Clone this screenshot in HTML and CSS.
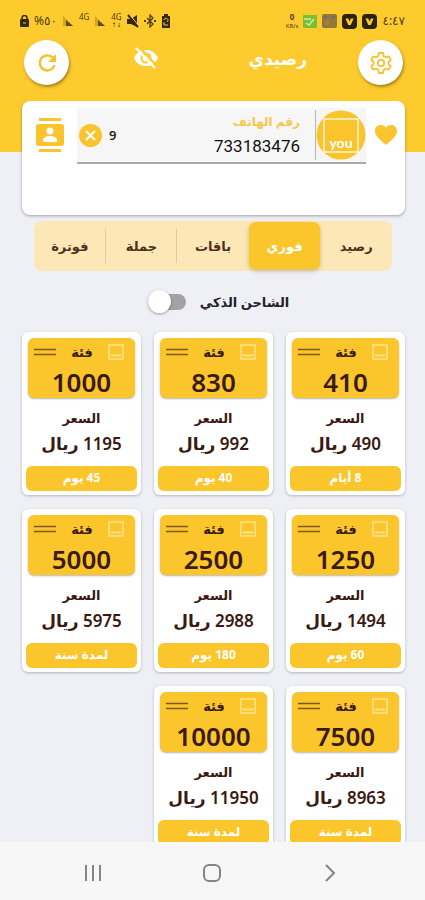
FILE: index.html
```
<!DOCTYPE html>
<html lang="ar" dir="rtl">
<head>
    <meta charset="UTF-8">
    <meta name="viewport" content="width=device-width, initial-scale=1.0">
    <title>رصيدي</title>
    <link rel="stylesheet" href="styles.css">
</head>
<body>
    <!-- Shared icons -->
    <svg class="sprite" aria-hidden="true">
        <symbol id="signal" viewBox="0 0 12 12">
            <path d="M1 1v10h10z" fill="#b98e1d" opacity="0.6"/>
            <path d="M4 5v6h7z" fill="#5d4816"/>
        </symbol>
        <symbol id="vbadge" viewBox="0 0 15 15">
            <rect width="15" height="15" rx="4" fill="#2b2210"/>
            <path d="M3.5 4.5h2.7l1.4 3 1.4-3h2.6L8.8 11H6.3z" fill="#fdcb2d"/>
        </symbol>
        <symbol id="sim" viewBox="0 0 16 16">
            <rect x="1" y="1" width="14" height="14" fill="none" stroke="#ffe596" stroke-width="1.4"/>
            <path d="M3 11.5h10" stroke="#ffe596" stroke-width="2" stroke-dasharray="3 0.5"/>
        </symbol>
        <symbol id="lines" viewBox="0 0 22 8">
            <path d="M0 1.5h22M0 6.5h22" stroke="#805710" stroke-width="1.4"/>
        </symbol>
    </svg>

    <div class="app">
        <header class="header">
            <div class="status-bar">
                <div class="status-group">
                    <span class="clock">٤:٤٧</span>
                    <svg width="15" height="15"><use href="#vbadge"/></svg>
                    <svg width="15" height="15"><use href="#vbadge"/></svg>
                    <svg width="15" height="14" viewBox="0 0 15 14">
                        <rect width="15" height="14" rx="2" fill="#8f7a35"/>
                        <path d="M2 2h3v2H2zM10 2h3v2h-3z" fill="#54718e"/>
                        <path d="M3 7h4v4H3z" fill="#a77d57"/>
                        <path d="M6 4h3v2H6z" fill="#c8594c"/>
                    </svg>
                    <svg width="14" height="13" viewBox="0 0 14 13">
                        <rect width="14" height="13" rx="1" fill="#7bbd36"/>
                        <path d="M1 4h7M3 8l3 2 5-6" stroke="#d3ec9b" stroke-width="1.5" fill="none"/>
                    </svg>
                    <span class="speed" dir="ltr"><b>0</b><small>KB/s</small></span>
                </div>
                <div class="status-group">
                    <svg width="10" height="14" viewBox="0 0 10 14">
                        <path d="M3 0h4v2h2v12H1V2h2z" fill="#33290f"/>
                        <path d="M3 6a2 2 0 1 1 3 2M3 8v3h4" stroke="#fdcb2d" fill="none"/>
                    </svg>
                    <svg width="12" height="14" viewBox="0 0 12 14">
                        <path d="M3 4l6 6-3 3V1l3 3-6 6" stroke="#4e3d14" stroke-width="1.3" fill="none"/>
                        <path d="M0 6h2v2H0zM10 6h2v2h-2z" fill="#4e3d14"/>
                    </svg>
                    <svg width="12" height="14" viewBox="0 0 12 14">
                        <path d="M0 5h4l6-4v12L4 10H0z" fill="#33290f"/>
                        <path d="M1 1l10 12" stroke="#33290f" stroke-width="2"/>
                        <path d="M3 1l9 11" stroke="#fdcb2d"/>
                    </svg>
                    <span class="network">4G<small>↓↑</small></span>
                    <svg width="12" height="12"><use href="#signal"/></svg>
                    <span class="network">4G</span>
                    <svg width="12" height="12"><use href="#signal"/></svg>
                    <span class="battery" dir="ltr">%٥٠</span>
                    <svg width="9" height="12" viewBox="0 0 9 12">
                        <path d="M2 5V3a2.500 2.500 0 0 1 5 0v2" stroke="#33290f" stroke-width="1.5" fill="none"/>
                        <rect y="4" width="9" height="8" rx="1" fill="#33290f"/>
                        <path d="M3 8h3" stroke="#fdcb2d"/>
                    </svg>
                </div>
            </div>

            <div class="title-bar">
                <button class="round-button" aria-label="الإعدادات">
                    <svg width="24" height="24" viewBox="0 0 24 24" fill="none" stroke="#f6bf2c" stroke-width="1.8" stroke-linejoin="round">
                        <path d="M10 2h4l.7 3.100 2.100 1.200 3-.9 2 3.500-2.300 2.100v2l2.300 2.100-2 3.500-3-.9-2.100 1.200L14 22h-4l-.7-3.100-2.100-1.200-3 .9-2-3.500L4.500 13v-2L2.200 8.900l2-3.500 3 .9 2.100-1.200z"/>
                        <circle cx="12" cy="12" r="3.200"/>
                    </svg>
                </button>
                <h1>رصيدي</h1>
                <button class="plain-button" aria-label="إخفاء الرصيد">
                    <svg width="26" height="24" viewBox="0 0 26 24">
                        <path d="M1 12C3.500 6.500 8 4 13 4s9.500 2.500 12 8c-2.500 5.500-7 8-12 8S3.500 17.500 1 12z" fill="#fff"/>
                        <circle cx="13" cy="12" r="4.500" fill="none" stroke="#fdcb2d" stroke-width="2"/>
                        <path d="M5 0l19 20" stroke="#fdcb2d" stroke-width="2.500"/>
                        <path d="M3 2l19 20" stroke="#fff" stroke-width="2.200"/>
                    </svg>
                </button>
                <button class="round-button" aria-label="تحديث">
                    <svg width="22" height="22" viewBox="0 0 22 22">
                        <path d="M16.500 5.500A7.500 7.500 0 1 0 18.500 13" stroke="#f6bf2c" stroke-width="2.400" fill="none"/>
                        <path d="M20 2v8h-8z" fill="#f6bf2c"/>
                    </svg>
                </button>
            </div>
        </header>

        <main class="content">
            <section class="phone-card">
                <button class="plain-button" aria-label="المفضلة">
                    <svg width="22" height="20" viewBox="0 0 22 20">
                        <path d="M11 20C4 14 0 10.500 0 6 0 2.500 2.500 0 5.800 0 8 0 10 1 11 2.800 12 1 14 0 16.200 0 19.500 0 22 2.500 22 6c0 4.500-4 8-11 14z" fill="#fbc42c"/>
                    </svg>
                </button>
                <div class="phone-field">
                    <svg class="operator" width="50" height="50" viewBox="0 0 50 50">
                        <circle cx="25" cy="25" r="24.500" fill="#fbc42c"/>
                        <rect x="8" y="9" width="34" height="33" fill="none" stroke="#fff3cf" stroke-width="1.600"/>
                        <text x="25" y="38" text-anchor="middle" class="operator-name">you</text>
                    </svg>
                    <div class="phone-text">
                        <label for="phone">رقم الهاتف</label>
                        <input id="phone" type="tel" value="733183476" dir="ltr">
                    </div>
                    <span class="digit-count">9</span>
                    <button class="plain-button" aria-label="مسح">
                        <svg width="23" height="23" viewBox="0 0 23 23">
                            <circle cx="11.500" cy="11.500" r="11.500" fill="#fbc42c"/>
                            <path d="M7 7l9 9M16 7l-9 9" stroke="#fff" stroke-width="2.200"/>
                        </svg>
                    </button>
                </div>
                <button class="plain-button" aria-label="جهات الاتصال">
                    <svg width="28" height="34" viewBox="0 0 28 34">
                        <path d="M3 0h22v3H3zM3 31h22v3H3z" fill="#fbc42c"/>
                        <rect y="6" width="28" height="22" rx="2.500" fill="#fbc42c"/>
                        <circle cx="14" cy="13" r="3.500" fill="#fff"/>
                        <path d="M7 24v-2c0-2.500 4-4 7-4s7 1.500 7 4v2z" fill="#fff"/>
                    </svg>
                </button>
            </section>

            <nav class="tabs">
                <button>رصيد</button>
                <button class="active">فوري</button>
                <button>باقات</button>
                <button>جملة</button>
                <button>فوترة</button>
            </nav>

            <div class="smart-charge">
                <label for="smart">الشاحن الذكي</label>
                <input id="smart" type="checkbox" class="switch">
            </div>

            <section class="cards">
                <article class="card">
                    <div class="card-top">
                        <div class="card-head">
                            <svg width="16" height="16"><use href="#sim"/></svg>
                            <span>فئة</span>
                            <svg width="22" height="8"><use href="#lines"/></svg>
                        </div>
                        <strong>410</strong>
                    </div>
                    <div class="card-label">السعر</div>
                    <div class="card-price">490 ريال</div>
                    <div class="card-period">8 أيام</div>
                </article>
                <article class="card">
                    <div class="card-top">
                        <div class="card-head">
                            <svg width="16" height="16"><use href="#sim"/></svg>
                            <span>فئة</span>
                            <svg width="22" height="8"><use href="#lines"/></svg>
                        </div>
                        <strong>830</strong>
                    </div>
                    <div class="card-label">السعر</div>
                    <div class="card-price">992 ريال</div>
                    <div class="card-period">40 يوم</div>
                </article>
                <article class="card">
                    <div class="card-top">
                        <div class="card-head">
                            <svg width="16" height="16"><use href="#sim"/></svg>
                            <span>فئة</span>
                            <svg width="22" height="8"><use href="#lines"/></svg>
                        </div>
                        <strong>1000</strong>
                    </div>
                    <div class="card-label">السعر</div>
                    <div class="card-price">1195 ريال</div>
                    <div class="card-period">45 يوم</div>
                </article>
                <article class="card">
                    <div class="card-top">
                        <div class="card-head">
                            <svg width="16" height="16"><use href="#sim"/></svg>
                            <span>فئة</span>
                            <svg width="22" height="8"><use href="#lines"/></svg>
                        </div>
                        <strong>1250</strong>
                    </div>
                    <div class="card-label">السعر</div>
                    <div class="card-price">1494 ريال</div>
                    <div class="card-period">60 يوم</div>
                </article>
                <article class="card">
                    <div class="card-top">
                        <div class="card-head">
                            <svg width="16" height="16"><use href="#sim"/></svg>
                            <span>فئة</span>
                            <svg width="22" height="8"><use href="#lines"/></svg>
                        </div>
                        <strong>2500</strong>
                    </div>
                    <div class="card-label">السعر</div>
                    <div class="card-price">2988 ريال</div>
                    <div class="card-period">180 يوم</div>
                </article>
                <article class="card">
                    <div class="card-top">
                        <div class="card-head">
                            <svg width="16" height="16"><use href="#sim"/></svg>
                            <span>فئة</span>
                            <svg width="22" height="8"><use href="#lines"/></svg>
                        </div>
                        <strong>5000</strong>
                    </div>
                    <div class="card-label">السعر</div>
                    <div class="card-price">5975 ريال</div>
                    <div class="card-period">لمدة سنة</div>
                </article>
                <article class="card">
                    <div class="card-top">
                        <div class="card-head">
                            <svg width="16" height="16"><use href="#sim"/></svg>
                            <span>فئة</span>
                            <svg width="22" height="8"><use href="#lines"/></svg>
                        </div>
                        <strong>7500</strong>
                    </div>
                    <div class="card-label">السعر</div>
                    <div class="card-price">8963 ريال</div>
                    <div class="card-period">لمدة سنة</div>
                </article>
                <article class="card">
                    <div class="card-top">
                        <div class="card-head">
                            <svg width="16" height="16"><use href="#sim"/></svg>
                            <span>فئة</span>
                            <svg width="22" height="8"><use href="#lines"/></svg>
                        </div>
                        <strong>10000</strong>
                    </div>
                    <div class="card-label">السعر</div>
                    <div class="card-price">11950 ريال</div>
                    <div class="card-period">لمدة سنة</div>
                </article>
            </section>
        </main>

        <footer class="nav-bar">
            <button class="plain-button" aria-label="رجوع">
                <svg width="20" height="20" viewBox="0 0 20 20" fill="none" stroke="#858585" stroke-width="2">
                    <path d="M6 2l8 8-8 8"/>
                </svg>
            </button>
            <button class="plain-button" aria-label="الرئيسية">
                <svg width="20" height="20" viewBox="0 0 20 20" fill="none" stroke="#858585" stroke-width="2">
                    <rect x="2" y="2" width="16" height="16" rx="5"/>
                </svg>
            </button>
            <button class="plain-button" aria-label="التطبيقات">
                <svg width="20" height="20" viewBox="0 0 20 20" fill="none" stroke="#858585" stroke-width="2">
                    <path d="M3 2v16M10 2v16M17 2v16"/>
                </svg>
            </button>
        </footer>
    </div>
</body>
</html>
```
FILE: styles.css
```
:root {
    --primary-color: #fdcb2d;
    --accent-color: #fbc62b;
    --background-color: #eff0f6;
    --text-color: #3a1a12;
}

* {
    margin: 0;
    padding: 0;
    box-sizing: border-box;
}

body {
    font-family: 'Noto Sans', 'DejaVu Sans', sans-serif;
    background-color: var(--background-color);
    color: var(--text-color);
}

button {
    font: inherit;
    border: none;
    cursor: pointer;
}

svg {
    display: block;
    flex: none;
}

.sprite {
    display: none;
}

.app {
    height: 100vh;
    display: flex;
    flex-direction: column;
}

/* Header */
.header {
    background-color: var(--primary-color);
    padding: 10px 20px 67px;
    flex: none;
}

.status-bar {
    display: flex;
    justify-content: space-between;
    align-items: center;
    height: 22px;
    color: #4e3d14;
}

.status-group {
    display: flex;
    align-items: center;
    gap: 5px;
}

.clock,
.battery {
    font-size: 12px;
    line-height: 14px;
}

.speed,
.network {
    display: flex;
    flex-direction: column;
    align-items: center;
    font-size: 8px;
    line-height: 8px;
}

.network {
    height: 16px;
}

.speed b {
    line-height: 10px;
}

.speed small,
.network small {
    font-size: 6px;
    line-height: 8px;
}

.title-bar {
    display: flex;
    align-items: center;
    padding: 8px 2px 0 4px;
}

.title-bar h1 {
    color: white;
    font-size: 17px;
    line-height: 28px;
    margin-right: 51px;
    padding-bottom: 8px;
}

.title-bar .plain-button {
    margin-right: auto;
    margin-left: 64px;
    padding-bottom: 10px;
}

.round-button {
    width: 45px;
    height: 45px;
    display: flex;
    align-items: center;
    justify-content: center;
    border-radius: 50%;
    background-color: white;
    box-shadow: 1px 2px 3px rgba(80, 60, 0, 0.5);
}

.plain-button {
    display: flex;
    background: none;
}

/* Phone number */
.content {
    flex: 1;
    min-height: 0;
    overflow: hidden;
    padding: 0 20px 0 22px;
    margin-top: -51px;
}

.phone-card {
    display: flex;
    align-items: flex-start;
    gap: 9px;
    height: 114px;
    padding: 7px 8px 0 14px;
    border-radius: 8px;
    background-color: white;
    box-shadow: 0 1px 3px rgba(0, 0, 0, 0.35);
}

.phone-card > .plain-button {
    height: 54px;
    align-items: center;
}

.phone-field {
    flex: 1;
    min-width: 0;
    display: flex;
    align-items: center;
    height: 56px;
    margin-left: 4px;
    padding-left: 2px;
    background-color: #f6f6f6;
    border-bottom: 2px solid #ababab;
}

.operator-name {
    fill: white;
    font-family: Lato, sans-serif;
    font-size: 14px;
    font-weight: bold;
}

.phone-text {
    flex: 1;
    min-width: 0;
    height: 50px;
    padding-right: 15px;
    border-right: 1px solid #b5b5b5;
}

.phone-text label {
    display: block;
    color: #f5c850;
    font-size: 12px;
    font-weight: bold;
    line-height: 24px;
}

.phone-text input {
    width: 100%;
    border: none;
    outline: none;
    background: none;
    color: #111;
    font-family: Roboto, sans-serif;
    font-size: 17px;
    line-height: 24px;
    text-align: right;
}

.digit-count {
    color: #222;
    font-size: 13px;
    font-weight: 600;
    margin-left: 7px;
}

/* Tabs */
.tabs {
    display: flex;
    height: 50px;
    margin: 6px 13px 0 12px;
    border-radius: 8px;
    background-color: #fce8b7;
}

.tabs button {
    flex: 1;
    background: none;
    color: #50301c;
    font-size: 13px;
    font-weight: bold;
}

.tabs button.active {
    height: 47px;
    margin-top: 1px;
    border-radius: 7px;
    background-color: var(--accent-color);
    color: white;
    box-shadow: 0 2px 4px rgba(120, 90, 0, 0.35);
}

.tabs button:nth-child(n+4) {
    background: linear-gradient(#dccba3, #dccba3) right center / 1px 34px no-repeat;
}

/* Smart charge switch */
.smart-charge {
    display: flex;
    justify-content: center;
    align-items: center;
    gap: 14px;
    height: 61px;
    padding-left: 10px;
    color: #25222b;
    font-size: 13px;
    font-weight: bold;
}

.switch {
    appearance: none;
    display: flex;
    align-items: center;
    justify-content: flex-end;
    width: 38px;
    height: 16px;
    border-radius: 8px;
    background-color: #a3a3a6;
}

.switch::before {
    content: "";
    width: 23px;
    height: 23px;
    flex: none;
    border-radius: 50%;
    background-color: white;
    box-shadow: 0 1px 3px rgba(0, 0, 0, 0.35);
}

.switch:checked {
    justify-content: flex-start;
    background-color: var(--accent-color);
}

/* Price cards */
.cards {
    display: grid;
    grid-template-columns: repeat(3, 1fr);
    gap: 14px 13px;
}

.card {
    height: 163px;
    padding: 6px 4px 4px;
    border-radius: 6px;
    background-color: white;
    box-shadow: 0 1px 3px rgba(0, 0, 0, 0.25);
    text-align: center;
}

.card-top {
    height: 60px;
    margin: 0 2px;
    border-radius: 6px;
    background-color: var(--accent-color);
    box-shadow: 0 1px 2px rgba(0, 0, 0, 0.3);
}

.card-head {
    display: flex;
    justify-content: space-between;
    align-items: center;
    height: 28px;
    padding: 0 11px 0 6px;
    font-size: 13px;
    font-weight: bold;
}

.card-top strong {
    display: block;
    font-size: 26px;
    font-weight: 600;
    line-height: 32px;
}

.card-label {
    margin-top: 8px;
    font-size: 13px;
    font-weight: bold;
    line-height: 24px;
}

.card-price {
    font-size: 17px;
    font-weight: 600;
    line-height: 28px;
}

.card-period {
    height: 25px;
    margin-top: 8px;
    border-radius: 6px;
    background-color: var(--accent-color);
    color: white;
    font-size: 12px;
    font-weight: bold;
    line-height: 24px;
}

/* Bottom navigation */
.nav-bar {
    flex: none;
    display: flex;
    justify-content: space-between;
    align-items: center;
    height: 58px;
    padding: 4px 85px 0 83px;
    background-color: #f7f7f7;
}
```
